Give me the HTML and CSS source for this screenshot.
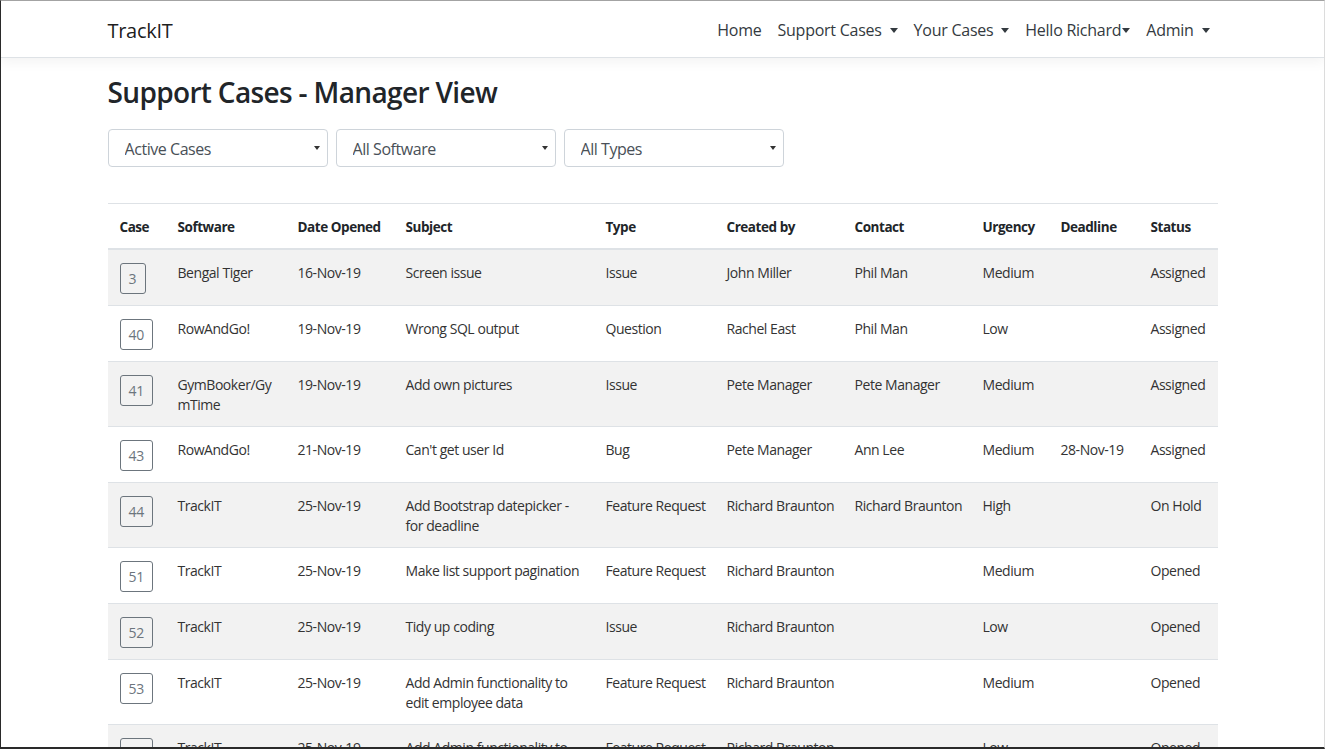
FILE: index.html
```html
<!DOCTYPE html>
<html lang="en">
<head>
<meta charset="utf-8">
<title>Support Cases - Manager View - TrackIT</title>
<link rel="stylesheet" href="styles.css">
</head>
<body>
<div class="window-frame"></div>
<header class="navbar">
  <div class="container nav-inner">
    <a class="brand" href="#">TrackIT</a>
    <ul class="nav">
      <li><a class="nav-link" href="#">Home</a></li>
      <li><a class="nav-link dropdown" href="#">Support Cases </a></li>
      <li><a class="nav-link dropdown" href="#">Your Cases </a></li>
      <li><a class="nav-link dropdown tight" href="#">Hello Richard</a></li>
      <li><a class="nav-link dropdown" href="#">Admin </a></li>
    </ul>
  </div>
</header>
<main class="container">
  <h3 class="title">Support Cases - Manager View</h3>
  <form class="filters">
    <select class="select"><option>Active Cases</option></select>
    <select class="select"><option>All Software</option></select>
    <select class="select"><option>All Types</option></select>
  </form>
  <table class="table">
    <colgroup>
      <col class="c-case"><col class="c-soft"><col class="c-date"><col class="c-subj"><col class="c-type">
      <col class="c-created"><col class="c-contact"><col class="c-urg"><col class="c-dead"><col class="c-status">
    </colgroup>
    <thead>
      <tr><th>Case</th><th>Software</th><th>Date Opened</th><th>Subject</th><th>Type</th><th>Created by</th><th>Contact</th><th>Urgency</th><th>Deadline</th><th>Status</th></tr>
    </thead>
    <tbody>
      <tr><td><a class="btn" href="#">3</a></td><td class="wrap">Bengal Tiger</td><td>16-Nov-19</td><td class="wrap">Screen issue</td><td>Issue</td><td>John Miller</td><td>Phil Man</td><td>Medium</td><td></td><td>Assigned</td></tr>
      <tr><td><a class="btn" href="#">40</a></td><td class="wrap">RowAndGo!</td><td>19-Nov-19</td><td class="wrap">Wrong SQL output</td><td>Question</td><td>Rachel East</td><td>Phil Man</td><td>Low</td><td></td><td>Assigned</td></tr>
      <tr><td><a class="btn" href="#">41</a></td><td class="wrap">GymBooker/GymTime</td><td>19-Nov-19</td><td class="wrap">Add own pictures</td><td>Issue</td><td>Pete Manager</td><td>Pete Manager</td><td>Medium</td><td></td><td>Assigned</td></tr>
      <tr><td><a class="btn" href="#">43</a></td><td class="wrap">RowAndGo!</td><td>21-Nov-19</td><td class="wrap">Can't get user Id</td><td>Bug</td><td>Pete Manager</td><td>Ann Lee</td><td>Medium</td><td>28-Nov-19</td><td>Assigned</td></tr>
      <tr><td><a class="btn" href="#">44</a></td><td class="wrap">TrackIT</td><td>25-Nov-19</td><td class="wrap">Add Bootstrap datepicker - for deadline</td><td>Feature Request</td><td>Richard Braunton</td><td>Richard Braunton</td><td>High</td><td></td><td>On Hold</td></tr>
      <tr><td><a class="btn" href="#">51</a></td><td class="wrap">TrackIT</td><td>25-Nov-19</td><td class="wrap">Make list support pagination</td><td>Feature Request</td><td>Richard Braunton</td><td></td><td>Medium</td><td></td><td>Opened</td></tr>
      <tr><td><a class="btn" href="#">52</a></td><td class="wrap">TrackIT</td><td>25-Nov-19</td><td class="wrap">Tidy up coding</td><td>Issue</td><td>Richard Braunton</td><td></td><td>Low</td><td></td><td>Opened</td></tr>
      <tr><td><a class="btn" href="#">53</a></td><td class="wrap">TrackIT</td><td>25-Nov-19</td><td class="wrap">Add Admin functionality to edit employee data</td><td>Feature Request</td><td>Richard Braunton</td><td></td><td>Medium</td><td></td><td>Opened</td></tr>
      <tr><td><a class="btn" href="#">54</a></td><td class="wrap">TrackIT</td><td>25-Nov-19</td><td class="wrap">Add Admin functionality to edit employee role</td><td>Feature Request</td><td>Richard Braunton</td><td></td><td>Low</td><td></td><td>Opened</td></tr>
    </tbody>
  </table>
</main>
</body>
</html>
```

FILE: styles.css
```css
* { box-sizing: border-box; }

html, body {
  margin: 0;
  padding: 0;
}

body {
  font-family: "Open Sans", "Noto Sans", "Liberation Sans", sans-serif;
  font-size: 16px;
  line-height: 1.5;
  color: #212529;
  background: #fff;
  overflow: hidden;
}

.window-frame {
  position: fixed;
  inset: 0;
  border-top: 1px solid #a3a3a3;
  border-left: 1px solid #2a2a2a;
  border-right: 1px solid #dcdcdc;
  border-bottom: 2px solid #2a2a2a;
  pointer-events: none;
  z-index: 10;
}

.container {
  width: 1140px;
  margin: 0 auto;
  padding: 0 15px;
}

.navbar {
  background: #fff;
  border-bottom: 1px solid #dee2e6;
  box-shadow: 0 4px 12px rgba(0, 0, 0, 0.05);
  padding: 10px 0 7px;
  margin-bottom: 16px;
}

.nav-inner {
  display: flex;
  align-items: center;
  justify-content: space-between;
}

.brand {
  font-size: 20px;
  line-height: 30px;
  padding: 6px 0 4px;
  color: rgba(0, 0, 0, 0.9);
  text-decoration: none;
  letter-spacing: -0.3px;
}

.nav {
  display: flex;
  list-style: none;
  margin: 0;
  padding: 0;
}

.nav-link {
  display: block;
  padding: 8px;
  color: #343a40;
  text-decoration: none;
  letter-spacing: -0.25px;
  white-space: pre;
}

.nav-link.dropdown::after {
  content: "";
  display: inline-block;
  margin-left: 4px;
  vertical-align: 3px;
  border-top: 5px solid #343a40;
  border-left: 4.5px solid transparent;
  border-right: 4.5px solid transparent;
}

.nav-link.tight::after {
  margin-left: 1px;
}

.title {
  font-size: 28px;
  font-weight: 600;
  line-height: 34px;
  margin: 0 0 20px;
  padding-top: 1px;
  letter-spacing: -0.65px;
}

.filters {
  display: flex;
  gap: 8px;
  margin-bottom: 36px;
}

.select {
  appearance: none;
  -webkit-appearance: none;
  width: 220px;
  height: 38px;
  padding: 5px 28px 3px 16px;
  font-family: inherit;
  font-size: 16px;
  letter-spacing: -0.45px;
  color: #495057;
  background: #fff url("data:image/svg+xml;utf8,<svg xmlns='http://www.w3.org/2000/svg' width='6' height='4'><path d='M0 0h6L3 4z' fill='%23333'/></svg>") no-repeat right 7px center;
  border: 1px solid #ced4da;
  border-radius: 4px;
}

.table {
  width: 100%;
  table-layout: fixed;
  border-collapse: collapse;
  font-size: 14px;
  line-height: 20px;
  color: #333;
  letter-spacing: -0.45px;
}

.c-case { width: 58px; }
.c-soft { width: 120px; }
.c-date { width: 108px; }
.c-subj { width: 200px; }
.c-type { width: 121px; }
.c-created { width: 128px; }
.c-contact { width: 128px; }
.c-urg { width: 78px; }
.c-dead { width: 90px; }
.c-status { width: 79px; }

.table th {
  text-align: left;
  font-weight: 700;
  color: #212529;
  font-size: 13.5px;
  line-height: 21px;
  padding: 13px 12px 10px;
  vertical-align: bottom;
  border-top: 1px solid #dee2e6;
  border-bottom: 2px solid #dee2e6;
  white-space: nowrap;
}

.table td {
  padding: 13px 12px 11px;
  vertical-align: top;
  border-top: 1px solid #dee2e6;
  white-space: nowrap;
}

.table td.wrap {
  white-space: normal;
  overflow-wrap: break-word;
}

.table tbody tr:nth-child(odd) {
  background: #f2f2f2;
}

.btn {
  display: inline-block;
  min-width: 26px;
  padding: 4px 8px;
  font-size: 14px;
  line-height: 21px;
  text-align: center;
  color: #6c757d;
  border: 1px solid #6c757d;
  border-radius: 3px;
  text-decoration: none;
  letter-spacing: -0.2px;
}
```
